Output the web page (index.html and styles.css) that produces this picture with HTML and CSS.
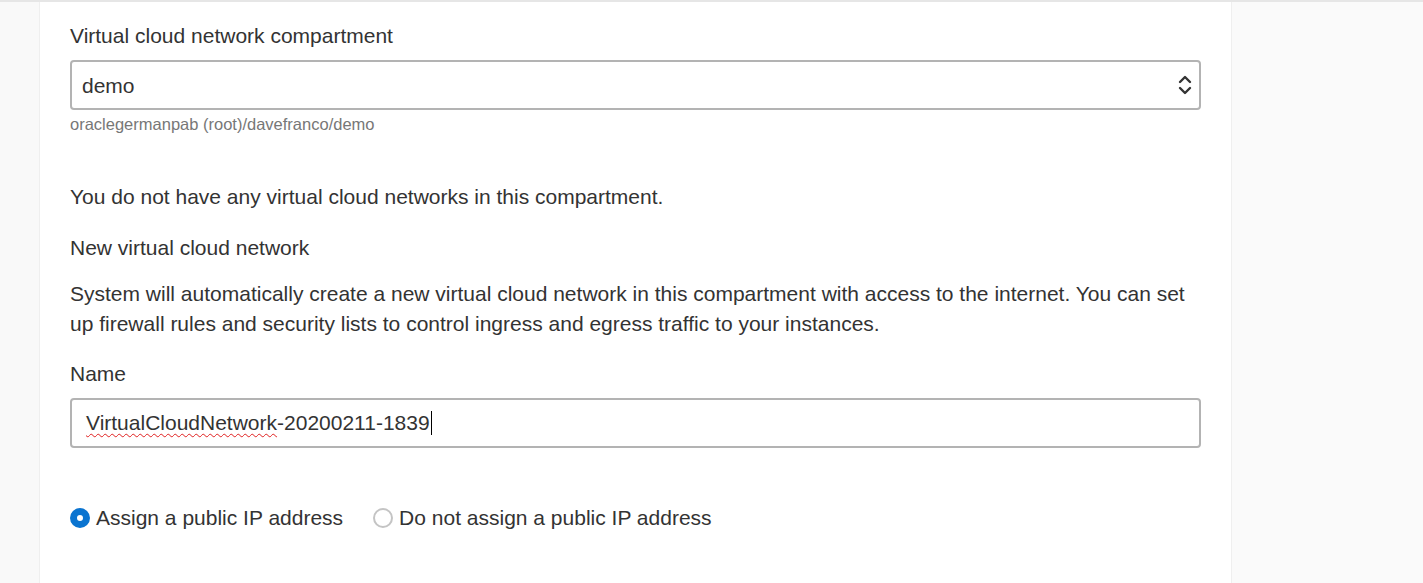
FILE: index.html
```html
<!DOCTYPE html>
<html>
<head>
<meta charset="utf-8">
<link rel="stylesheet" href="styles.css">
</head>
<body>
<div class="page">
  <div class="gutter"></div>
  <main class="panel">
    <div class="field">
      <label class="label">Virtual cloud network compartment</label>
      <div class="select">
        <span class="select-value">demo</span>
        <svg class="chevrons" width="14" height="24" viewBox="0 0 14 24">
          <path d="M2 9 L7 4 L12 9" fill="none" stroke="#333" stroke-width="2.4" stroke-linecap="round" stroke-linejoin="round"/>
          <path d="M2 15 L7 20 L12 15" fill="none" stroke="#333" stroke-width="2.4" stroke-linecap="round" stroke-linejoin="round"/>
        </svg>
      </div>
      <div class="hint">oraclegermanpab (root)/davefranco/demo</div>
    </div>
    <p class="text notice">You do not have any virtual cloud networks in this compartment.</p>
    <p class="text subhead">New virtual cloud network</p>
    <p class="text para">System will automatically create a new virtual cloud network in this compartment with access to the internet. You can set up firewall rules and security lists to control ingress and egress traffic to your instances.</p>
    <div class="field name-field">
      <label class="label">Name</label>
      <div class="input"><span class="spell">VirtualCloudNetwork</span>-20200211-1839<span class="caret"></span></div>
    </div>
    <div class="radios">
      <label class="radio"><span class="dot checked"></span>Assign a public IP address</label>
      <label class="radio"><span class="dot"></span>Do not assign a public IP address</label>
    </div>
  </main>
  <div class="aside"></div>
</div>
</body>
</html>
```
FILE: styles.css
```css
html, body {
  margin: 0;
  padding: 0;
  height: 100%;
  background: #fafafa;
}
body {
  font-family: "Liberation Sans", Arial, sans-serif;
  color: #333;
  overflow: hidden;
}
.page {
  display: flex;
  height: 583px;
  border-top: 2px solid #e6e6e6;
  box-sizing: border-box;
}
.gutter {
  width: 39px;
  flex: none;
  background: #f9f9f9;
  border-right: 1px solid #efefef;
}
.panel {
  width: 1192px;
  flex: none;
  background: #fff;
  box-sizing: border-box;
  padding: 0 30px 0 30px;
  border-right: 1px solid #efefef;
}
.aside {
  flex: 1;
  background: #fafafa;
}
.field {
  display: flex;
  flex-direction: column;
}
.label {
  font-size: 21px;
  line-height: 24px;
  margin-top: 22px;
  margin-bottom: 12px;
}
.select, .input {
  height: 50px;
  box-sizing: border-box;
  border: 2px solid #b3b3b3;
  border-radius: 4px;
  display: flex;
  align-items: center;
  font-size: 21px;
}
.select {
  padding: 0 7px 0 10px;
  justify-content: space-between;
}
.select-value {
  margin-top: 1px;
}
.hint {
  font-size: 16.5px;
  color: #777;
  margin-top: 5px;
  line-height: 18px;
}
.text {
  margin: 0;
  font-size: 21px;
}
.notice {
  margin-top: 51px;
  line-height: 26px;
}
.subhead {
  margin-top: 25px;
  line-height: 26px;
}
.para {
  margin-top: 18px;
  line-height: 30px;
}
.name-field .label {
  margin-top: 23px;
  margin-bottom: 12px;
}
.input {
  padding: 0 14px;
}
.spell {
  text-decoration: underline wavy #e02020;
  text-decoration-thickness: 1.3px;
  text-underline-offset: 3px;
}
.caret {
  display: inline-block;
  width: 1px;
  height: 24px;
  background: #000;
  margin-left: 1px;
}
.radios {
  display: flex;
  gap: 30px;
  margin-top: 58px;
  font-size: 21px;
  line-height: 24px;
}
.radio {
  display: flex;
  align-items: center;
  gap: 6px;
}
.dot {
  width: 20px;
  height: 20px;
  flex: none;
  box-sizing: border-box;
  border-radius: 50%;
  border: 2px solid #c4c4c4;
  background: #fff;
}
.dot.checked {
  border: 7px solid #0a74d0;
  background: #fff;
}
```
